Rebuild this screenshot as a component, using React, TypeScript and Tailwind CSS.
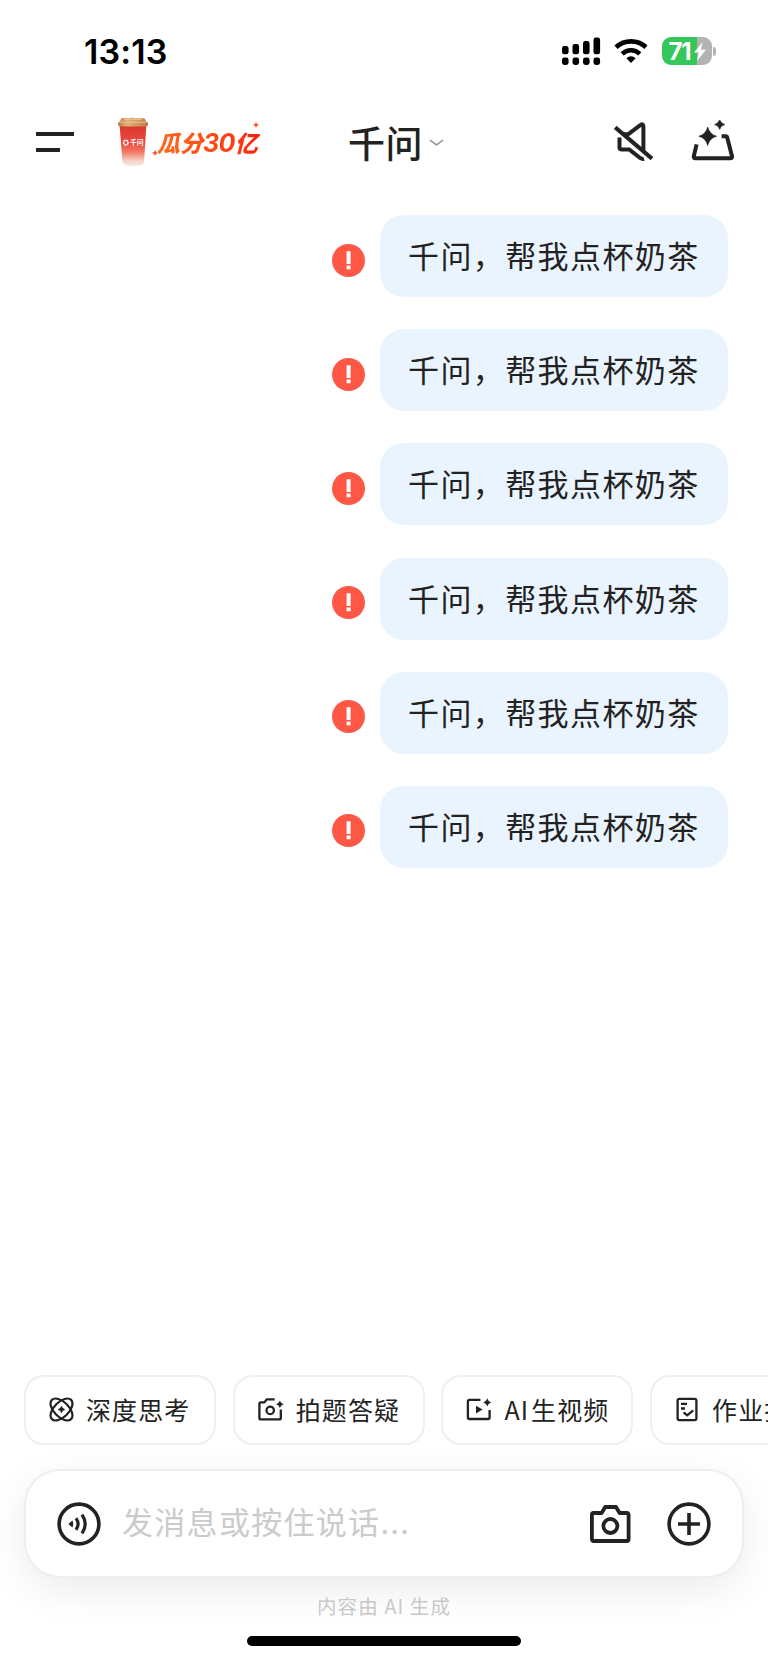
import React from "react";

const CJK = "font-['Noto_Sans_CJK_SC',sans-serif]";
const INK = "#222222";

function Signal() {
  const xs = [0, 10.5, 21, 31.5];
  const tops = [9, 7, 4, 0.5];
  return (
    <svg width="39" height="29" viewBox="0 0 39 29" fill="#000">
      {xs.map((x, i) => (
        <g key={x}>
          <rect x={x} y={tops[i]} width="6.6" height={17.3 - tops[i]} rx="2.4" />
          <rect x={x} y="20.6" width="6.6" height="7.4" rx="2.4" />
        </g>
      ))}
    </svg>
  );
}

function Wifi() {
  return (
    <svg width="34" height="26" viewBox="0 0 34 26" fill="none" stroke="#000" strokeWidth="4.6">
      <path d="M2 9.2C10.5 1.4 23.5 1.4 32 9.2" />
      <path d="M8.2 15.8C13.2 11 20.8 11 25.8 15.8" />
      <path d="M12.4 20.3C15 17.6 19 17.6 21.6 20.3L17 25Z" fill="#000" stroke="none" />
    </svg>
  );
}

function Battery() {
  return (
    <div className="flex items-center">
      <div className="relative flex h-[28px] w-[50px] items-center overflow-hidden rounded-[9px] bg-[linear-gradient(90deg,#34c759_70%,#b3b3b3_70%)] pl-[7px]">
        <span className="mt-[1px] font-['Inter',sans-serif] text-[24px] font-bold leading-none tracking-[-1.2px] text-white">71</span>
        <svg className="absolute left-[32px] top-[5px]" width="12" height="19" viewBox="0 0 12 19" fill="#fff">
          <path d="M8.6 0L0 10.6H4.8L3 19L12 7.8H6.8Z" />
        </svg>
      </div>
      <div className="ml-[1.5px] h-[9px] w-[3px] rounded-r-full bg-[#b3b3b3]" />
    </div>
  );
}

function Cup() {
  return (
    <svg width="34" height="50" viewBox="0 0 34 50">
      <defs>
        <linearGradient id="cupBody" x1="0" y1="0" x2="0" y2="1">
          <stop offset="0" stopColor="#d8382f" />
          <stop offset="0.45" stopColor="#ee4a3c" />
          <stop offset="0.66" stopColor="#f27a68" />
          <stop offset="0.86" stopColor="#f5d0c4" />
          <stop offset="1" stopColor="#f4ece8" />
        </linearGradient>
        <linearGradient id="cupLid" x1="0" y1="0" x2="1" y2="0">
          <stop offset="0" stopColor="#b9783f" />
          <stop offset="0.3" stopColor="#e2b27c" />
          <stop offset="0.7" stopColor="#cf9459" />
          <stop offset="1" stopColor="#b77a45" />
        </linearGradient>
      </defs>
      <path d="M3.6 8H30.4L28 45.6C27.5 50.4 7 50.4 6.5 45.6Z" fill="url(#cupBody)" />
      <path d="M5 1.8Q5.4 1 7 1H14L16 0.6L18 1.2H27Q28.8 1.2 29.2 2.4L30 4.4Q32.2 4.8 32 6.4V8Q31.8 9.4 30 9.4H4Q2.2 9.4 2 8V6.4Q2 4.8 4 4.4Z" fill="url(#cupLid)" />
      <path d="M4 5.2H30M8 2.4H26" stroke="#edc596" strokeWidth="0.9" fill="none" />
      <circle cx="9.8" cy="25.6" r="2.3" fill="none" stroke="#fff" strokeWidth="1.6" strokeDasharray="2 0.5" />
      <text x="14" y="28.2" fontSize="6.8" fontWeight="700" fill="#fff" fontFamily="Noto Sans CJK SC, sans-serif">千问</text>
    </svg>
  );
}

function Spark({ className }: { className: string }) {
  return (
    <svg className={className} width="6" height="6" viewBox="0 0 6 6">
      <path d="M3 0L4 2L6 3L4 4L3 6L2 4L0 3L2 2Z" fill="#ff5026" />
    </svg>
  );
}

function Mute() {
  return (
    <svg width="42" height="42" viewBox="0 0 42 42" fill="none" stroke={INK} strokeWidth="4" strokeLinejoin="round">
      <path d="M2.2 6.4L39 37.6" />
      <path d="M10.6 13.2H15.4L27.6 3.9Q30.4 2.2 30.4 5.4V29.6" />
      <path d="M6.5 16.6V26.6Q6.5 28.4 8.3 28.4H16.2L27.4 37.2Q29.2 38.4 31 37.8" />
    </svg>
  );
}

function MagicBox() {
  return (
    <svg width="44" height="44" viewBox="0 0 44 44" fill="none" stroke={INK} strokeWidth="4">
      <path d="M5.6 24.4L2.8 36.2Q2.4 38.2 4.4 38.2H39.4Q41.4 38.2 41 36.2L36.2 17.4Q35.9 16.2 34.6 16.2H30.6" strokeLinejoin="round" />
      <path d="M16.7 7Q18.5 14.3 25.6 16.2Q18.5 18.1 16.7 25.4Q14.9 18.1 7.8 16.2Q14.9 14.3 16.7 7Z" fill={INK} stroke={INK} strokeWidth="0.6" />
      <path d="M28.7 -0.5Q29.8 3.4 33.8 4.5Q29.8 5.6 28.7 9.5Q27.6 5.6 23.6 4.5Q27.6 3.4 28.7 -0.5Z" fill={INK} stroke={INK} strokeWidth="0.6" />
    </svg>
  );
}

function Atom() {
  return (
    <svg width="25" height="25" viewBox="0 0 25 25" fill="none" stroke={INK} strokeWidth="2.2">
      <ellipse cx="12.5" cy="12.5" rx="13.6" ry="7.4" transform="rotate(45 12.5 12.5)" />
      <ellipse cx="12.5" cy="12.5" rx="13.6" ry="7.4" transform="rotate(-45 12.5 12.5)" />
      <path d="M12.5 9Q13.2 11.8 16 12.5Q13.2 13.2 12.5 16Q11.8 13.2 9 12.5Q11.8 11.8 12.5 9Z" fill={INK} stroke={INK} strokeWidth="0.4" />
    </svg>
  );
}

function CameraSpark() {
  return (
    <svg width="26" height="25" viewBox="0 0 26 25" fill="none" stroke={INK} strokeWidth="2.3">
      <path d="M16.6 2.3H8.8L6.4 5.4H2.9Q1.4 5.4 1.4 6.9V20.9Q1.4 22.4 2.9 22.4H21.3Q22.8 22.4 22.8 20.9V12.6" strokeLinejoin="round" />
      <circle cx="12.2" cy="13.4" r="3.7" />
      <path d="M21.9 3.2Q22.7 6.4 26 7.1Q22.7 7.9 21.9 11.1Q21.1 7.9 17.8 7.1Q21.1 6.4 21.9 3.2Z" fill={INK} stroke="none" />
    </svg>
  );
}

function VideoSpark() {
  return (
    <svg width="26" height="25" viewBox="0 0 26 25" fill="none" stroke={INK} strokeWidth="2.3">
      <path d="M14.4 2.9H3.4Q1.9 2.9 1.9 4.4V20.5Q1.9 22 3.4 22H22.1Q23.6 22 23.6 20.5V12.9" />
      <path d="M10 8.7L16.6 12.6L10 16.5Z" fill={INK} stroke="none" />
      <path d="M21.2 1.3Q22 4.6 25.2 5.4Q22 6.2 21.2 9.5Q20.4 6.2 17 5.4Q20.4 4.6 21.2 1.3Z" fill={INK} stroke="none" />
    </svg>
  );
}

function Homework() {
  return (
    <svg width="25" height="25" viewBox="0 0 25 25" fill="none" stroke={INK} strokeWidth="2.3">
      <rect x="2.6" y="1.9" width="18.8" height="21.2" rx="1.8" />
      <path d="M6 6.9H12M6 11.5H10M8.6 15.3L12.2 18.3L18.2 13.3" />
    </svg>
  );
}

function Voice() {
  return (
    <svg width="44" height="44" viewBox="0 0 44 44" fill="none" stroke={INK} strokeWidth="3.6">
      <circle cx="22" cy="22" r="19.9" />
      <path d="M11.3 22L15.4 18.6Q17 22 15.4 25.4Z" fill={INK} stroke="none" />
      <path d="M19 16.2Q23.2 22 19 27.8M25 12.6Q31.4 22 25 31.4" strokeWidth="3.2" />
    </svg>
  );
}

function Camera() {
  return (
    <svg width="42" height="40" viewBox="0 0 42 40" fill="none" stroke={INK} strokeWidth="3.8" strokeLinejoin="round">
      <path d="M15.2 3H26L29.6 9H36.6Q38.6 9 38.6 11V35Q38.6 37 36.6 37H3.6Q1.9 37 1.9 35V11Q1.9 9 3.6 9H11.6Z" />
      <circle cx="20.4" cy="22" r="7" />
    </svg>
  );
}

function Plus() {
  return (
    <svg width="44" height="44" viewBox="0 0 44 44" fill="none" stroke={INK} strokeWidth="3.6">
      <circle cx="22" cy="22" r="19.9" />
      <path d="M22 11V33M11 22H33" />
    </svg>
  );
}

function Message() {
  return (
    <div className="flex items-center justify-end pr-10">
      <svg className="mr-[15px] mt-[8px]" width="33" height="33" viewBox="0 0 33 33">
        <circle cx="16.5" cy="16.5" r="16.5" fill="#ff5745" />
        <path d="M14.6 7.2H18.6V20H14.6ZM14.6 21.6H18.6V25.2H14.6Z" fill="#fff" />
      </svg>
      <div className="flex h-[82px] w-[348px] items-center whitespace-nowrap rounded-[24px] bg-[#eaf4ff] pb-[2px] pl-[28px] text-[31px] leading-[40px] tracking-[1.4px] text-[#222]">
        千问，帮我点杯奶茶
      </div>
    </div>
  );
}

const chips = [
  { prefix: "", label: "深度思考", icon: <Atom /> },
  { prefix: "", label: "拍题答疑", icon: <CameraSpark /> },
  { prefix: "AI", label: "生视频", icon: <VideoSpark /> },
  { prefix: "", label: "作业批改", icon: <Homework /> },
];

export default function App() {
  return (
    <div className={`${CJK} flex h-[1663px] w-[768px] flex-col overflow-hidden bg-white text-[#222]`}>
      <div className="flex h-[102px] items-center pl-[84px] pr-[52px]">
        <span className="mt-[1px] font-['Inter',sans-serif] text-[34px] font-semibold leading-none tracking-[0.1px] text-black">13:13</span>
        <div className="ml-auto flex items-center">
          <Signal />
          <div className="ml-[13px] mr-[14px]"><Wifi /></div>
          <Battery />
        </div>
      </div>

      <header className="flex h-[79px] items-center pl-[36px] pr-[33px]">
        <div className="flex flex-col gap-3">
          <div className="h-1 w-[38px] bg-[#222]" />
          <div className="h-1 w-[24px] bg-[#222]" />
        </div>
        <div className="ml-[42px]"><Cup /></div>
        <div className="relative ml-[5px] w-[105px]">
          <span className="mt-[2px] block whitespace-nowrap bg-linear-to-r from-[#ff6a1f] to-[#ff1e0c] bg-clip-text pl-[2px] text-[23px] font-black italic leading-[34px] text-transparent">
            瓜分<span className="font-['Inter',sans-serif] text-[25px] font-bold tracking-[-0.6px]">30</span>亿
          </span>
          <Spark className="absolute -left-[3px] top-[27px]" />
          <Spark className="absolute -top-[1px] right-[1px]" />
        </div>
        <div className="ml-[88px] whitespace-nowrap text-[37px] font-medium leading-[48px] tracking-[0.4px]">千问</div>
        <svg className="ml-[6px] mt-[2px]" width="15" height="8" viewBox="0 0 15 8" fill="none" stroke="#999" strokeWidth="1.6">
          <path d="M1 1.2L7.5 6L14 1.2" />
        </svg>
        <div className="ml-auto"><Mute /></div>
        <div className="ml-[36px]"><MagicBox /></div>
      </header>

      <main className="flex flex-col gap-[32.2px] pt-[34px]">
        {Array.from({ length: 6 }, (_, i) => (
          <Message key={i} />
        ))}
      </main>

      <div className="mt-auto flex shrink-0 gap-[16.7px] pl-6">
        {chips.map((chip) => (
          <div
            key={chip.label}
            className="flex h-[70px] w-[192px] shrink-0 items-center gap-[12px] whitespace-nowrap rounded-[20px] border-2 border-[#efefef] bg-white pb-[1px] pl-[23px] text-[25px] leading-none tracking-[1.1px]"
          >
            {chip.icon}
            <span className="-mt-[1px]">
              {chip.prefix && <span className="mr-[2px]">{chip.prefix}</span>}
              {chip.label}
            </span>
          </div>
        ))}
      </div>

      <div className="mx-6 mt-6 flex h-[109px] shrink-0 items-center rounded-[36px] border-2 border-[#eeeeee] bg-white pl-[31px] pr-[31px] shadow-[0_12px_40px_rgba(0,0,0,0.08)]">
        <Voice />
        <span className="-mt-[5px] ml-[21px] text-[31px] leading-[40px] tracking-[1.3px] text-[#cbcbcb]">发消息或按住说话...</span>
        <div className="ml-auto"><Camera /></div>
        <div className="ml-[35px]"><Plus /></div>
      </div>

      <div className="mt-[16px] text-center text-[19.5px] leading-[24px] tracking-[1.15px] text-[#c8c8c8]">内容由 AI 生成</div>
      <div className="mx-auto mb-[17px] mt-[18px] h-[10px] w-[274px] shrink-0 rounded-full bg-black" />
    </div>
  );
}
